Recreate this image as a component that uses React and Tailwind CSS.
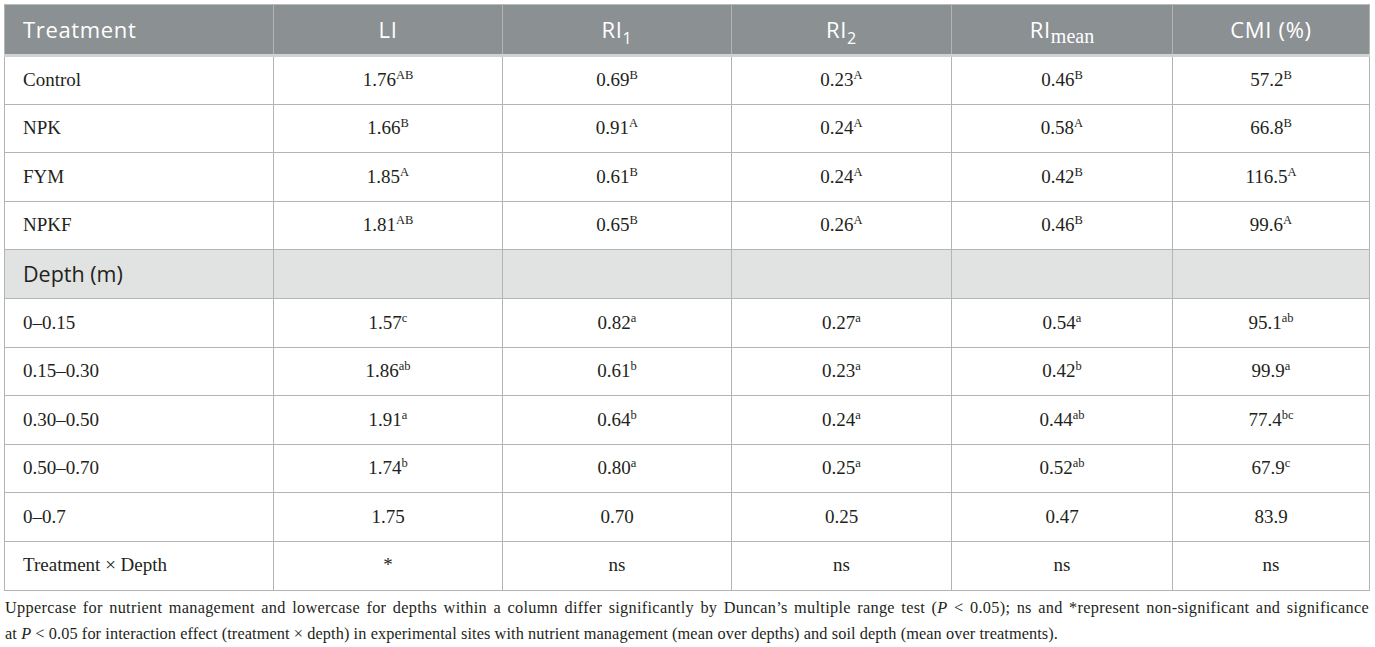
import React from "react";

const serif = { fontFamily: '"Liberation Serif", "Times New Roman", serif' };

const rowsA = [
  ["Control", ["1.76", "AB"], ["0.69", "B"], ["0.23", "A"], ["0.46", "B"], ["57.2", "B"]],
  ["NPK", ["1.66", "B"], ["0.91", "A"], ["0.24", "A"], ["0.58", "A"], ["66.8", "B"]],
  ["FYM", ["1.85", "A"], ["0.61", "B"], ["0.24", "A"], ["0.42", "B"], ["116.5", "A"]],
  ["NPKF", ["1.81", "AB"], ["0.65", "B"], ["0.26", "A"], ["0.46", "B"], ["99.6", "A"]],
];
const rowsB = [
  ["0–0.15", ["1.57", "c"], ["0.82", "a"], ["0.27", "a"], ["0.54", "a"], ["95.1", "ab"]],
  ["0.15–0.30", ["1.86", "ab"], ["0.61", "b"], ["0.23", "a"], ["0.42", "b"], ["99.9", "a"]],
  ["0.30–0.50", ["1.91", "a"], ["0.64", "b"], ["0.24", "a"], ["0.44", "ab"], ["77.4", "bc"]],
  ["0.50–0.70", ["1.74", "b"], ["0.80", "a"], ["0.25", "a"], ["0.52", "ab"], ["67.9", "c"]],
  ["0–0.7", ["1.75", ""], ["0.70", ""], ["0.25", ""], ["0.47", ""], ["83.9", ""]],
  ["Treatment × Depth", ["*", ""], ["ns", ""], ["ns", ""], ["ns", ""], ["ns", ""]],
];

function Cell({ v }) {
  return (
    <td className="border border-[#b3b5b5] text-center align-middle text-[19px] text-[#231f20]" style={serif}>
      {v[0]}
      {v[1] ? <sup className="text-[12.5px] top-[-0.55em]">{v[1]}</sup> : null}
    </td>
  );
}

function Row({ r }) {
  return (
    <tr className="h-[48.6px]">
      <td className="border border-[#b3b5b5] pl-[18px] text-left align-middle text-[19px] text-[#231f20]" style={serif}>
        {r[0]}
      </td>
      {r.slice(1).map((v, i) => (
        <Cell key={i} v={v} />
      ))}
    </tr>
  );
}

const hd = "border-l border-r border-[#b3b5b5] border-b-[3px] border-b-[#cfd3d1] text-[22px] tracking-[0.03em] font-normal text-white text-center align-middle";
const sans = { fontFamily: '"Open Sans", "Noto Sans", sans-serif' };

export default function App() {
  return (
    <div className="w-[1375px] h-[647px] bg-white overflow-hidden pt-[4px] pl-[4px]">
      <table className="border-collapse border border-[#b9bdbb] table-fixed w-[1365px]">
        <colgroup>
          <col className="w-[269px]" />
          <col className="w-[229px]" />
          <col className="w-[229px]" />
          <col className="w-[220px]" />
          <col className="w-[221px]" />
          <col className="w-[197px]" />
        </colgroup>
        <thead>
          <tr className="h-[51px] bg-[#8b9093]">
            <th className={hd + " !text-left pl-[18px]"} style={sans}>Treatment</th>
            <th className={hd} style={sans}>LI</th>
            <th className={hd} style={sans}>
              RI<sub className="text-[16px] bottom-[-0.35em]">1</sub>
            </th>
            <th className={hd} style={sans}>
              RI<sub className="text-[16px] bottom-[-0.35em]">2</sub>
            </th>
            <th className={hd} style={sans}>
              RI<sub className="text-[20px] bottom-[-0.25em] tracking-normal" style={serif}>mean</sub>
            </th>
            <th className={hd} style={sans}>CMI (%)</th>
          </tr>
        </thead>
        <tbody>
          {rowsA.map((r, i) => (
            <Row key={i} r={r} />
          ))}
          <tr className="h-[48.6px] bg-[#e1e3e2]">
            <td className="border border-[#b3b5b5] pl-[18px] text-left align-middle text-[21.5px] text-[#231f20]" style={sans}>
              Depth (m)
            </td>
            <td className="border border-[#b3b5b5]"></td>
            <td className="border border-[#b3b5b5]"></td>
            <td className="border border-[#b3b5b5]"></td>
            <td className="border border-[#b3b5b5]"></td>
            <td className="border border-[#b3b5b5]"></td>
          </tr>
          {rowsB.map((r, i) => (
            <Row key={i} r={r} />
          ))}
        </tbody>
      </table>
      <div className="mt-[4px] pl-[1px] w-[1365px] text-[16.3px] leading-[26px] text-[#231f20]" style={serif}>
        <p className="text-justify [text-align-last:justify] whitespace-nowrap tracking-[0.3px]">
          Uppercase for nutrient management and lowercase for depths within a column differ significantly by Duncan’s multiple range test (<i>P</i> &lt; 0.05); ns and *represent non-significant and significance
        </p>
        <p className="tracking-[0.1px]">
          at <i>P</i> &lt; 0.05 for interaction effect (treatment × depth) in experimental sites with nutrient management (mean over depths) and soil depth (mean over treatments).
        </p>
      </div>
    </div>
  );
}
